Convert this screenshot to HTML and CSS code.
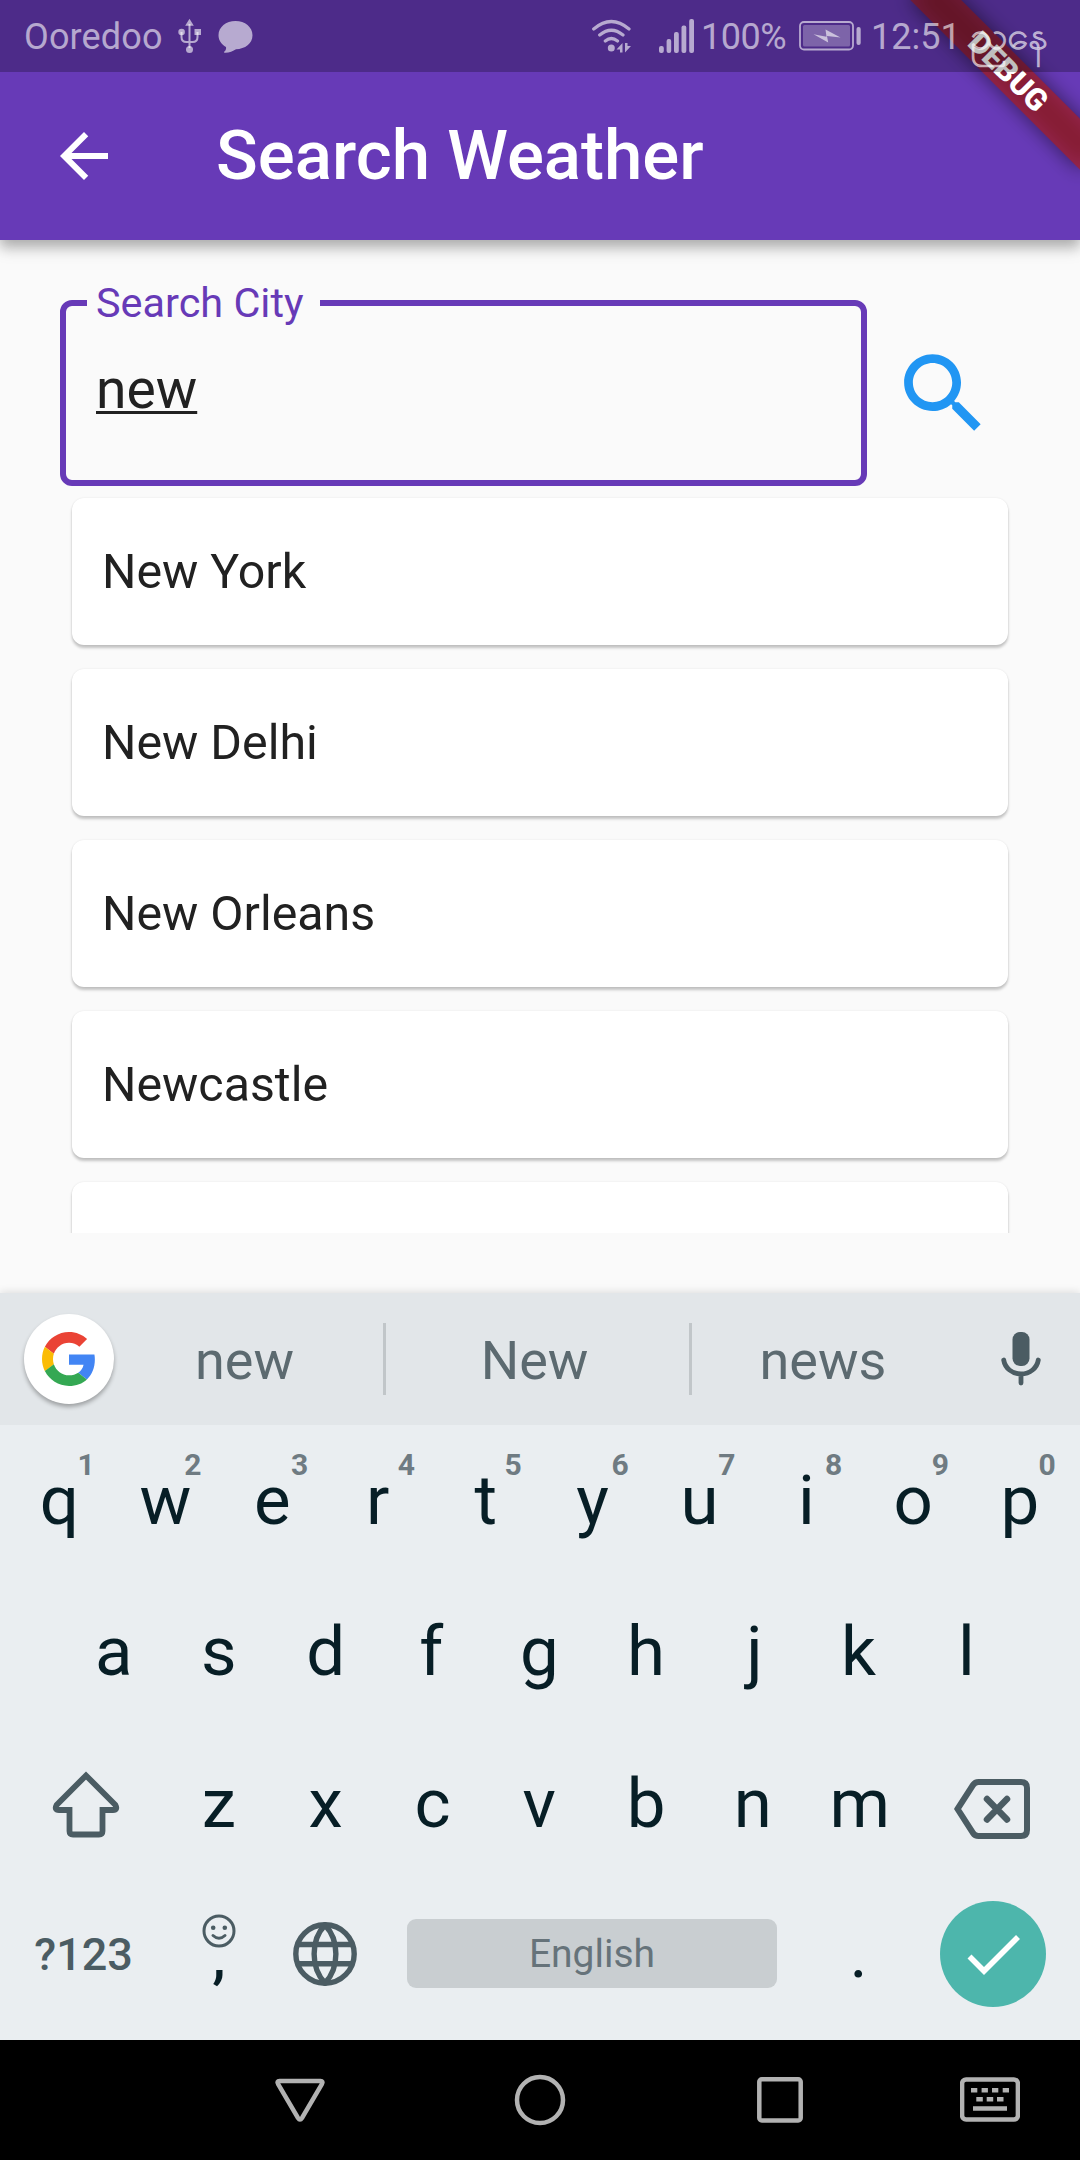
FILE: index.html
```html
<!DOCTYPE html>
<html lang="en">
<head>
<meta charset="utf-8">
<title>Search Weather</title>
<link rel="stylesheet" href="styles.css">
</head>
<body>
<div class="screen">
  <div class="status-bar">
    <span class="carrier">Ooredoo</span>
    <svg class="usb" width="24" height="36" viewBox="0 0 24 36" fill="none" stroke="currentColor" stroke-width="2">
      <path d="M11.500 6v24M3.500 14v5q0 5 5 5h6q5 0 5-5v-5"/>
      <g fill="currentColor" stroke="none"><path d="M11.500 .8l4.300 7h-8.600z"/><circle cx="3.600" cy="14" r="3.300"/><path d="M16.500 11h6.500v6h-6.500z"/><circle cx="11.500" cy="31.500" r="3.500"/></g>
    </svg>
    <svg class="bubble" width="35" height="34" viewBox="0 0 35 34" fill="currentColor"><path d="M17.500 1C27 1 34.500 7 34.500 15.300S27 29 18 29.300c-3 2-7.500 3.700-11.500 3.400-.6-.1-.6-.8-.1-1.200 1.300-1 2-2.600 1.600-4.500C3.500 24.500.5 20.400.5 15.300.5 7 8 1 17.500 1z"/></svg>
    <span class="spacer"></span>
    <svg class="wifi" width="42" height="36" viewBox="0 0 42 36" fill="none" stroke="currentColor" stroke-width="3.200" stroke-linecap="round">
      <path d="M2.700 11Q20.300-4 38 11M8.700 17Q20.300 7.500 32 17M14.300 23Q20.300 18 26.500 23"/>
      <g fill="currentColor" stroke="none"><circle cx="20.300" cy="30" r="3.500"/><path d="M31.500 25v9.500H29v-3h-3.500zM34 25h2.500v3H40l-6 6.500z"/></g>
    </svg>
    <svg class="signal" width="36" height="34" viewBox="0 0 36 34" fill="currentColor">
      <rect x="0" y="27" width="4.800" height="7" rx="2"/><rect x="7.600" y="20" width="4.600" height="14" rx="2"/><rect x="15" y="13" width="4.800" height="21" rx="2"/><rect x="22.500" y="6.500" width="4.800" height="27.500" rx="2"/><rect x="30.200" y="0" width="4.800" height="34" rx="2"/>
    </svg>
    <span class="percent">100%</span>
    <svg class="battery" width="62" height="30" viewBox="0 0 62 30">
      <rect x="1" y="1" width="53" height="27.500" rx="4" fill="none" stroke="currentColor" stroke-width="1.800"/>
      <rect x="4" y="4" width="47" height="21.500" rx="1.500" fill="#fff" fill-opacity=".27"/>
      <path d="M14.500 13.200l13 2.500-1-7.200 15 8-13.500-1.600 1.200 6.600z" fill="#fff" fill-opacity=".6"/>
      <rect x="57.500" y="6" width="4.200" height="18" rx="2" fill="currentColor"/>
    </svg>
    <span class="clock">12:51 <span class="evening" lang="my">ညနေ</span></span>
  </div>

  <header class="app-bar">
    <svg class="back" width="72" height="72" viewBox="0 0 24 24" fill="#fff"><path d="M20 11H7.830l5.590-5.590L12 4l-8 8 8 8 1.410-1.410L7.830 13H20v-2z"/></svg>
    <h1>Search Weather</h1>
    <div class="debug-banner"><span>DEBUG</span></div>
  </header>

  <main class="content">
    <div class="search-row">
      <div class="field"><label>Search City</label><span class="value">new</span></div>
      <svg width="105" height="105" viewBox="0 0 24 24" fill="#2196f3"><path d="M15.500 14h-.79l-.28-.27C15.410 12.590 16 11.110 16 9.500 16 5.910 13.090 3 9.500 3S3 5.910 3 9.500 5.910 16 9.500 16c1.610 0 3.090-.59 4.230-1.570l.27.28v.79l5 4.990L20.490 19l-4.990-5zm-6 0C7.010 14 5 11.990 5 9.500S7.010 5 9.500 5 14 7.010 14 9.500 11.990 14 9.500 14z"/></svg>
    </div>
    <div class="results">
      <div class="card">New York</div>
      <div class="card">New Delhi</div>
      <div class="card">New Orleans</div>
      <div class="card">Newcastle</div>
      <div class="card"></div>
    </div>
  </main>

  <section class="keyboard">
    <div class="suggestions">
      <div class="google">
        <svg width="54" height="54" viewBox="0 0 48 48"><path fill="#ea4335" d="M24 9.500c3.540 0 6.710 1.220 9.210 3.600l6.850-6.850C35.900 2.380 30.470 0 24 0 14.620 0 6.510 5.380 2.560 13.220l7.980 6.190C12.430 13.720 17.740 9.500 24 9.500z"/><path fill="#4285f4" d="M46.980 24.550c0-1.570-.15-3.090-.38-4.550H24v9.020h12.940c-.58 2.960-2.260 5.480-4.780 7.180l7.730 6c4.510-4.180 7.090-10.360 7.090-17.650z"/><path fill="#fbbc05" d="M10.530 28.590c-.48-1.450-.76-2.990-.76-4.590s.27-3.140.76-4.590l-7.980-6.190C.92 16.460 0 20.120 0 24s.92 7.540 2.560 10.780l7.970-6.190z"/><path fill="#34a853" d="M24 48c6.480 0 11.930-2.130 15.890-5.810l-7.730-6c-2.150 1.450-4.920 2.300-8.160 2.300-6.260 0-11.570-4.220-13.470-9.910l-7.980 6.190C6.510 42.620 14.620 48 24 48z"/></svg>
      </div>
      <span class="word first">new</span><i></i><span class="word second">New</span><i></i><span class="word third">news</span>
      <svg class="mic" width="40" height="54" viewBox="0 0 40 54"><rect x="11.500" y="0" width="17" height="34" rx="7.500" fill="#4b5c63"/><path d="M2.700 28C4 36 11 42 20 42s16-6 17.300-14M20 43v8" fill="none" stroke="#4b5c63" stroke-width="4.800" stroke-linecap="round"/></svg>
    </div>

    <div class="keys">
      <span class="key">q<sup>1</sup></span><span class="key">w<sup>2</sup></span><span class="key">e<sup>3</sup></span><span class="key narrow">r<sup>4</sup></span><span class="key">t<sup>5</sup></span><span class="key">y<sup>6</sup></span><span class="key">u<sup>7</sup></span><span class="key">i<sup>8</sup></span><span class="key">o<sup>9</sup></span><span class="key">p<sup>0</sup></span>
    </div>
    <div class="keys middle">
      <span class="key">a</span><span class="key">s</span><span class="key">d</span><span class="key narrow">f</span><span class="key">g</span><span class="key">h</span><span class="key hook">j</span><span class="key narrow">k</span><span class="key">l</span>
    </div>
    <div class="keys">
      <span class="key wide"><svg width="70" height="68" viewBox="0 0 70 68" fill="none" stroke="#4b5c63" stroke-width="5.800"><path d="M35 5.500L5.600 35Q3 40 8 40H18.500V61Q18.500 64.500 22 64.500H48Q51.500 64.500 51.500 61V40H62Q67 40 64.400 35Z"/></svg></span>
      <span class="key">z</span><span class="key">x</span><span class="key">c</span><span class="key">v</span><span class="key">b</span><span class="key">n</span><span class="key">m</span>
      <span class="key wide delete"><svg width="76" height="60" viewBox="0 0 76 60" fill="none" stroke="#4b5c63" stroke-width="6"><path d="M3.500 30L19 6Q21 3 24.500 3H67Q73 3 73 9V51Q73 57 67 57H24.500Q21 57 19 54Z"/><path d="M33 20L53 40.500M53 20L33 40.500" stroke-linecap="round" stroke-width="6.500"/></svg></span>
    </div>
    <div class="keys bottom">
      <span class="key wide symbols">?123</span>
      <span class="key comma"><svg width="34" height="34" viewBox="0 0 34 34" fill="none" stroke="#4b5c63" stroke-width="3"><circle cx="17" cy="17" r="15"/><path d="M11 21.500q6 5.500 12 0" stroke-linecap="round"/><g fill="#4b5c63" stroke="none"><circle cx="11.200" cy="13.700" r="2.300"/><circle cx="22.800" cy="13.700" r="2.300"/></g></svg><b>,</b></span>
      <span class="key globe"><svg width="64" height="64" viewBox="0 0 64 64" fill="none" stroke="#4b5c63" stroke-width="5.400"><circle cx="32" cy="32" r="29.200"/><path d="M5 22.500H59M5 41.800H59M32 3C17.500 18 17.500 46 32 61C46.500 46 46.500 18 32 3Z"/></svg></span>
      <span class="space">English</span>
      <span class="key period">.</span>
      <span class="key wide"><span class="enter"><svg width="106" height="106" viewBox="0 0 106 106" fill="none" stroke="#fff" stroke-width="5.600"><path d="M29.500 55.500L44 70L78 36"/></svg></span></span>
    </div>
  </section>

  <nav class="nav-bar">
    <svg width="52" height="52" viewBox="0 0 52 52"><path d="M5.500 7H46.500Q49.500 7 48 9.800L28 44Q26 47 24 44L4 9.800Q2.500 7 5.500 7Z"/></svg>
    <svg width="52" height="52" viewBox="0 0 52 52"><circle cx="26" cy="26" r="23"/></svg>
    <svg width="52" height="52" viewBox="0 0 52 52"><rect x="5.300" y="5.300" width="41.400" height="41.200" rx="2.500"/></svg>
    <svg class="ime" width="60" height="46" viewBox="0 0 60 46"><rect x="2.100" y="2.500" width="55.800" height="40" rx="4"/><path d="M11 13.200h6.300M21.600 13.200h6.300M32 13.200h6.300M42.700 13.200H49M16.300 22.200h6.500M26.700 22.200h6.500M37 22.200h6.500M13 31.500h34"/></svg>
  </nav>
</div>
</body>
</html>
```

FILE: styles.css
```css
* { box-sizing: border-box; }
body { margin: 0; background: #fafafa; font-family: Roboto, "Noto Sans", sans-serif; }
svg { display: block; flex: none; }
.screen { width: 1080px; height: 2160px; display: flex; flex-direction: column; overflow: hidden; position: relative; }

.status-bar { position: relative; z-index: 3; height: 72px; flex: none; display: flex; align-items: center; padding: 0 28px 0 24px; background: rgba(0,0,0,.25); color: rgba(255,255,255,.6); font-size: 36px; line-height: 72px; white-space: nowrap; }
.carrier { width: 154px; padding-top: 1px; letter-spacing: .15px; }
.bubble { margin-left: 16px; margin-top: 2px; }
.spacer { flex: 1; }
.wifi { margin-right: 26px; }
.signal { margin-right: 6px; }
.percent { width: 98px; padding-top: 1px; letter-spacing: -.5px; }
.battery { margin-right: 10px; }
.clock { width: 181px; padding-top: 1px; }
.evening { font-size: 39px; line-height: 1; -webkit-text-stroke: .6px rgba(255,255,255,.5); }

.app-bar { position: relative; z-index: 2; height: 240px; margin-top: -72px; padding: 72px 0 0 48px; flex: none; display: flex; align-items: center; background: #673ab7; box-shadow: 0 6px 12px rgba(0,0,0,.2), 0 9px 15px rgba(0,0,0,.15); }
.app-bar h1 { margin: 0 0 0 96px; color: #fff; font-size: 69px; font-weight: 500; line-height: 84px; }
.debug-banner { position: absolute; left: 960px; top: 84px; width: 240px; height: 36px; transform-origin: 120px -84px; transform: rotate(45deg); text-align: center; }
.debug-banner::before { content: ""; position: absolute; inset: 0; background: rgba(0,0,0,.5); filter: blur(10px); }
.debug-banner span { position: absolute; inset: 0; background: rgba(183,28,28,.627); color: #fff; font-size: 30.6px; font-weight: 900; line-height: 36px; }

.content { height: 1053px; flex: none; padding: 60px 60px 0; display: flex; flex-direction: column; }
.search-row { display: flex; align-items: center; gap: 24px; height: 186px; flex: none; }
.field { position: relative; width: 807px; height: 186px; border: 6px solid #673ab7; border-radius: 12px; padding: 51px 30px; }
.field label { position: absolute; left: 21px; top: -27px; width: 233px; padding-left: 9px; background: #fafafa; color: #673ab7; font-size: 41.4px; line-height: 48px; }
.value { font-size: 55.2px; line-height: 65px; color: #212121; text-decoration: underline; text-decoration-thickness: 3px; text-underline-offset: 3px; text-decoration-skip-ink: none; display: block; }
.results { height: 747px; padding: 12px 12px 0; overflow: hidden; display: flex; flex-direction: column; gap: 24px; }
.card { height: 147px; flex: none; padding-left: 30px; background: #fff; border-radius: 12px; font-size: 48.3px; line-height: 147px; color: #212121; box-shadow: 0 3px 3px rgba(0,0,0,.22), 0 0 2px rgba(0,0,0,.09); }

.keyboard { position: relative; height: 747px; flex: none; background: #eaeef1; box-shadow: 0 -1px 8px rgba(0,0,0,.12); }
.suggestions { height: 132px; background: #e2e6e9; display: flex; align-items: center; padding-left: 24px; color: #5c6a70; font-size: 54px; }
.suggestions i { width: 3px; height: 72px; background: #c1c6c9; }
.google { width: 90px; height: 90px; border-radius: 50%; background: #fff; display: flex; align-items: center; justify-content: center; box-shadow: 0 3px 4px rgba(0,0,0,.3); flex: none; }
.word { padding-top: 2px; text-align: center; }
.first { width: 269px; padding-right: 8px; }
.second { width: 303px; padding-right: 6px; }
.third { width: 263px; padding-right: 1px; }
.mic { margin-left: 46px; }

.keys { display: flex; height: 151.5px; padding: 0 6px; color: #071e26; font-size: 69px; line-height: 151.5px; }
.middle { padding: 0 59.4px; line-height: 150px; }
.key { position: relative; width: 106.8px; flex: none; padding-right: 1.4px; text-align: center; display: flex; align-items: center; justify-content: center; }
.key:first-child { padding: 0; }
.middle .key:first-child { padding-left: 2px; }
.keys .narrow { padding-right: 4px; }
.keys .hook { padding: 0 0 0 2px; }
.key sup { position: absolute; left: 70px; top: 22px; width: 20px; text-align: center; font-size: 30px; font-weight: 700; line-height: 36px; color: #6f7b82; }
.wide { width: 160.2px; padding: 0; }
.keys .delete { padding: 10px 4px 0 0; }
.bottom { padding-bottom: 3px; }
.keys .symbols { font-size: 45px; font-weight: 500; color: #4b5c63; padding: 2px 5px 0 0; }
.comma { flex-direction: column; justify-content: flex-start; padding-top: 34.5px; }
.comma b { font-weight: 500; font-size: 60px; line-height: 17px; }
.globe { padding-right: 3px; }
.space { width: 370px; height: 69px; margin: 39.5px 29px 0 27.2px; border-radius: 9px; background: #c9ced1; color: #66737a; font-size: 39px; line-height: 71px; text-align: center; flex: none; }
.enter { width: 106px; height: 106px; border-radius: 50%; background: #4db6ac; }

.nav-bar { height: 120px; flex: none; background: #000; display: flex; align-items: center; gap: 188px; padding-left: 274px; }
.nav-bar svg { fill: none; stroke: #b2b2b2; stroke-width: 4.500px; }
.nav-bar .ime { margin-left: -34px; }
```
